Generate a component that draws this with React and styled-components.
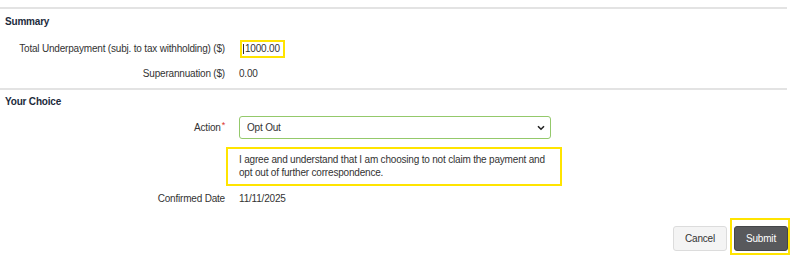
import React from "react";
import styled, { createGlobalStyle } from "styled-components";

const GlobalStyle = createGlobalStyle`
  body {
    margin: 0;
    background: #fff;
    font-family: "Liberation Sans", Arial, sans-serif;
    font-size: 10px;
    letter-spacing: -0.19px;
    color: #333;
  }
`;

const Page = styled.div`
  width: 800px;
  padding-top: 7px;
  box-sizing: border-box;
`;

const Divider = styled.div`
  width: 787px;
  border-top: 2px solid #e3e3e3;
  margin-top: ${(p) => p.top || 0}px;
`;

const SectionTitle = styled.h4`
  margin: ${(p) => p.top || 6}px 0 0 0;
  padding-left: 5px;
  font-size: 10px;
  line-height: 14px;
  font-weight: 700;
  color: #1c2b3c;
`;

const Form = styled.div`
  display: grid;
  grid-template-columns: 225px 1fr;
  column-gap: 14px;
  margin-top: ${(p) => p.top || 0}px;
`;

const Label = styled.div`
  text-align: right;
  display: flex;
  align-items: center;
  justify-content: flex-end;
  white-space: nowrap;
  height: ${(p) => p.h || 25}px;
  margin-top: ${(p) => p.top || 0}px;
`;

const Value = styled.div`
  display: flex;
  align-items: center;
  height: ${(p) => p.h || 25}px;
  margin-top: ${(p) => p.top || 0}px;
`;

const Required = styled.span`
  color: #d9342b;
  font-size: 9px;
  position: relative;
  top: -3px;
  margin-left: 1px;
`;

const Highlight = styled.span`
  display: inline-flex;
  align-items: center;
  border: 2px solid #ffe400;
  height: 14px;
  padding: 0 3px 0 1px;
  margin-left: 1px;
`;

const Caret = styled.span`
  width: 1px;
  height: 10px;
  background: #333;
  margin-right: 1px;
`;

const SelectWrap = styled.div`
  position: relative;
  width: 312px;
  height: 23px;
`;

const Select = styled.select`
  appearance: none;
  width: 100%;
  height: 100%;
  box-sizing: border-box;
  border: 1px solid #94c96b;
  border-radius: 3px;
  background: #fff;
  padding: 0 7px;
  font-family: inherit;
  font-size: 10px;
  letter-spacing: inherit;
  color: #333;
  outline: none;
`;

const Chevron = styled.svg`
  position: absolute;
  right: 6px;
  top: 9px;
  pointer-events: none;
`;

const HelpBox = styled.div`
  grid-column: 2;
  margin-top: 8px;
  margin-left: -13px;
  width: 336px;
  height: 39px;
  box-sizing: border-box;
  border: 2px solid #ffe400;
  padding: 4px 8px 0 11px;
  line-height: 13.3px;
  color: #333;
`;

const Footer = styled.div`
  display: flex;
  justify-content: flex-end;
  align-items: flex-start;
  width: 800px;
  padding-right: 10px;
  box-sizing: border-box;
  margin-top: 7px;
  gap: 3px;
`;

const Button = styled.button`
  height: 25px;
  width: ${(p) => p.w}px;
  padding: 0;
  border-radius: 3px;
  font-family: inherit;
  font-size: 10px;
  letter-spacing: inherit;
  cursor: pointer;
  border: 1px solid ${(p) => (p.primary ? "#444649" : "#dcdcdc")};
  background: ${(p) => (p.primary ? "#58595c" : "#f4f4f4")};
  color: ${(p) => (p.primary ? "#fff" : "#333")};
  margin-top: ${(p) => p.top || 0}px;
`;

const ButtonHighlight = styled.div`
  border: 2px solid #ffe400;
  padding: 6px 0 2px 2px;
`;

export default function App() {
  return (
    <Page>
      <GlobalStyle />
      <Divider />
      <SectionTitle>Summary</SectionTitle>
      <Form top={7}>
        <Label>Total Underpayment (subj. to tax withholding) ($)</Label>
        <Value>
          <Highlight>
            <Caret />
            1000.00
          </Highlight>
        </Value>
        <Label>Superannuation ($)</Label>
        <Value>0.00</Value>
      </Form>
      <Divider top={2} />
      <SectionTitle top={5}>Your Choice</SectionTitle>
      <Form top={7}>
        <Label h={23}>
          Action<Required>*</Required>
        </Label>
        <Value h={23}>
          <SelectWrap>
            <Select defaultValue="optout">
              <option value="optout">Opt Out</option>
              <option value="claim">Claim</option>
            </Select>
            <Chevron width="8" height="6" viewBox="0 0 8 6">
              <path d="M1 1.2 L4 4.2 L7 1.2" fill="none" stroke="#222" strokeWidth="1.6" />
            </Chevron>
          </SelectWrap>
        </Value>
        <HelpBox>
          I agree and understand that I am choosing to not claim the payment and
          opt out of further correspondence.
        </HelpBox>
        <Label>Confirmed Date</Label>
        <Value>11/11/2025</Value>
      </Form>
      <Footer>
        <Button w={54} top={8}>Cancel</Button>
        <ButtonHighlight>
          <Button primary w={54}>Submit</Button>
        </ButtonHighlight>
      </Footer>
    </Page>
  );
}
